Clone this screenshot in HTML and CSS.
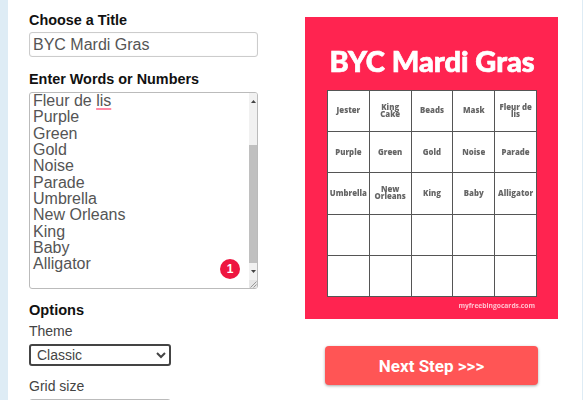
FILE: index.html
```html
<!DOCTYPE html>
<html lang="en">
<head>
<meta charset="utf-8">
<title>Bingo Card Creator</title>
<link rel="stylesheet" href="styles.css">
</head>
<body>
<div class="page">
  <aside class="strip strip-left"></aside>
  <main class="main">
    <form class="form">
      <label class="heading heading-title" for="title">Choose a Title</label>
      <input class="title-input" id="title" type="text" value="BYC Mardi Gras">
      <div class="heading heading-words">Enter Words or Numbers</div>
      <div class="words">
        <div class="words-text">
          <div class="words-scroll">
            <div>Fleur de <span class="misspelled">lis</span></div>
            <div>Purple</div>
            <div>Green</div>
            <div>Gold</div>
            <div>Noise</div>
            <div>Parade</div>
            <div>Umbrella</div>
            <div>New Orleans</div>
            <div>King</div>
            <div>Baby</div>
            <div>Alligator</div>
          </div>
          <span class="badge">1</span>
        </div>
        <div class="scrollbar">
          <div class="arrow"><svg width="5" height="3" viewBox="0 0 5 3"><path d="M2.5 0L5 3H0z" fill="#444"/></svg></div>
          <div class="track"><div class="thumb"></div></div>
          <div class="arrow"><svg width="5" height="3" viewBox="0 0 5 3"><path d="M0 0H5L2.500 3z" fill="#444"/></svg></div>
          <div class="grip"><svg width="8" height="8" viewBox="0 0 8 8"><path d="M7.500 1.500L1.500 7.500M7.500 4.500L4.500 7.500" stroke="#999" fill="none"/></svg></div>
        </div>
      </div>
      <div class="heading heading-options">Options</div>
      <label class="field-label" for="theme">Theme</label>
      <select class="select select-focus" id="theme"><option>Classic</option></select>
      <label class="field-label field-grid" for="grid">Grid size</label>
      <select class="select select-plain" id="grid"><option>5x5</option></select>
    </form>
    <section class="preview">
      <div class="card">
        <h1 class="card-title">BYC Mardi Gras</h1>
        <div class="grid">
          <div class="cell">Jester</div><div class="cell">King Cake</div><div class="cell">Beads</div><div class="cell">Mask</div><div class="cell">Fleur de lis</div>
          <div class="cell">Purple</div><div class="cell">Green</div><div class="cell">Gold</div><div class="cell">Noise</div><div class="cell">Parade</div>
          <div class="cell">Umbrella</div><div class="cell">New Orleans</div><div class="cell">King</div><div class="cell">Baby</div><div class="cell">Alligator</div>
          <div class="cell"></div><div class="cell"></div><div class="cell"></div><div class="cell"></div><div class="cell"></div>
          <div class="cell"></div><div class="cell"></div><div class="cell"></div><div class="cell"></div><div class="cell"></div>
        </div>
        <div class="card-foot">myfreebingocards.com</div>
      </div>
      <button class="next" type="button">Next Step &gt;&gt;&gt;</button>
    </section>
  </main>
  <aside class="strip strip-right"></aside>
</div>
</body>
</html>
```

FILE: styles.css
```css
* { box-sizing: border-box; }
html, body { margin: 0; height: 400px; overflow: hidden; background: #fff; }
.page { display: flex; width: 583px; height: 400px; overflow: hidden; font-family: "Liberation Sans", Arial, sans-serif; }
.strip { background: #deecf5; flex: none; }
.strip-left { width: 8px; }
.strip-right { width: 1px; }
.main { flex: 1; display: flex; min-width: 0; }

.form { width: 250px; flex: none; padding: 12px 0 0 21px; display: flex; flex-direction: column; align-items: flex-start; }
.form > * { flex: none; }
.heading { display: block; font-weight: 700; font-size: 14.4px; line-height: 16px; color: #111; }
.title-input { width: 229px; height: 25px; margin-top: 4px; padding: 0 3px; border: 1px solid #ccc; border-radius: 3px; font: 16px "Liberation Sans", Arial, sans-serif; color: #555; background: #fff; box-shadow: inset 0 0 1px #ddd; outline: none; }
.heading-words { margin-top: 14px; }

.words { width: 229px; height: 197px; margin-top: 5px; display: flex; border: 1px solid #bbb; border-radius: 3px; overflow: hidden; }
.words-text { flex: 1; position: relative; overflow: hidden; padding: 0 3px; font-size: 16px; line-height: 16.33px; color: #555; }
.misspelled { text-decoration: underline #ff8aa5 1.5px; text-underline-offset: 2px; }
.badge { position: absolute; left: 190px; top: 166px; width: 20px; height: 20px; border-radius: 50%; background: #ee1640; color: #fff; font-size: 12px; font-weight: 700; line-height: 20px; text-align: center; }
.scrollbar { width: 8px; flex: none; display: flex; flex-direction: column; background: #f1f1f1; }
.arrow { height: 17px; flex: none; display: flex; align-items: center; justify-content: center; }
.track { flex: 1; padding-top: 35px; display: flex; flex-direction: column; }
.thumb { flex: 1; background: #c0c0c0; }
.grip { height: 8px; flex: none; background: #e6e6e6; line-height: 0; }

.heading-options { margin-top: 13px; font-size: 14.6px; }
.field-label { display: block; margin-top: 5px; font-size: 14px; line-height: 16px; color: #444; }
.select { display: block; width: 142px; height: 22px; font: 14px "Liberation Sans", Arial, sans-serif; color: #444; background: #fff; border-radius: 3px; padding: 0 2px; }
.select-focus { margin-top: 5px; border: 2px solid #444; outline: none; }
.field-grid { margin-top: 12px; }
.select-plain { margin-top: 5px; border: 1px solid #bbb; }

.preview { flex: 1; padding: 17px 0 0 47px; display: flex; flex-direction: column; align-items: flex-start; }
.card { width: 253px; height: 302px; flex: none; background: #ff2450; padding: 26px 21px 0 22px; display: flex; flex-direction: column; filter: blur(0.35px); }
.card-title { margin: 0; height: 47px; font-family: Lato, sans-serif; font-weight: 900; font-size: 29px; line-height: 36px; color: #fff; text-align: center; white-space: nowrap; -webkit-text-stroke: 0.7px #fff; }
.grid { width: 210px; height: 207px; display: grid; grid-template-columns: repeat(5, 1fr); grid-template-rows: repeat(5, 1fr); gap: 1px; padding: 1px; background: #555; flex: none; }
.cell { background: #fff; display: flex; align-items: center; justify-content: center; text-align: center; padding: 0 1px; font-family: "Open Sans", sans-serif; font-weight: 800; font-size: 7.800px; line-height: 7.500px; color: #666; }
.card-foot { margin: 4px 2px 0 0; font-family: "Open Sans", sans-serif; font-weight: 700; font-size: 6.700px; line-height: 10px; color: #ffc2cf; text-align: right; }

.next { width: 213px; height: 39px; margin: 27px 0 0 20px; border: 0; border-radius: 4px; background: #ff5555; color: #fff; font-family: Roboto, sans-serif; font-weight: 700; font-size: 17px; box-shadow: 0 1px 3px rgba(0,0,0,.35); padding: 0; flex: none; }
```
